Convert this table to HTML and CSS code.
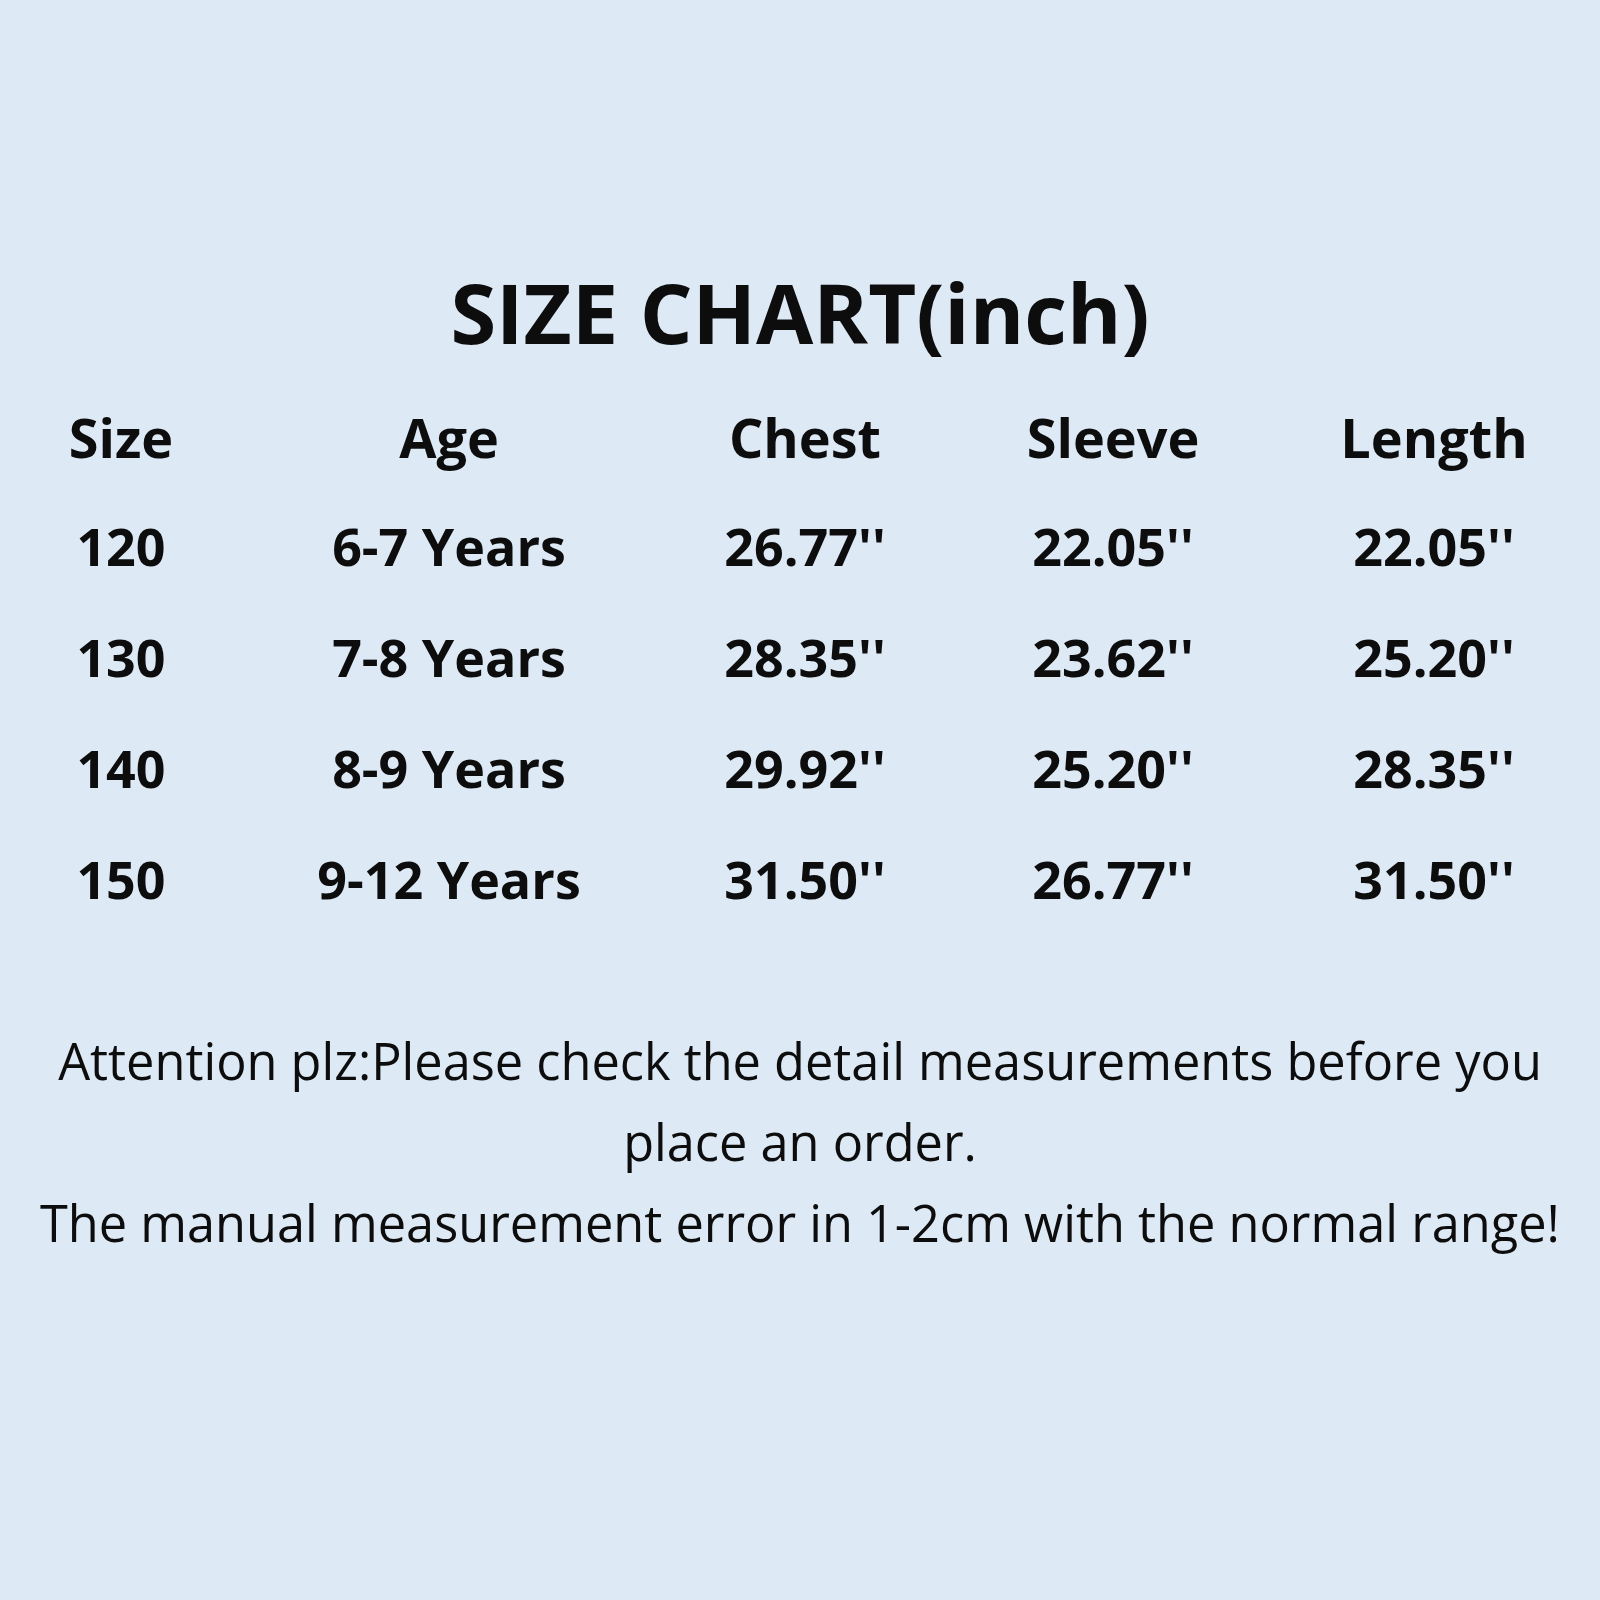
FILE: index.html
```html
<!DOCTYPE html>
<html lang="en">
<head>
<meta charset="utf-8">
<title>Size Chart</title>
<link rel="stylesheet" href="styles.css">
</head>
<body>
<main class="page">
  <h1 class="title">SIZE CHART(inch)</h1>
  <div class="chart">
    <div class="row head">
      <span>Size</span><span>Age</span><span>Chest</span><span>Sleeve</span><span>Length</span>
    </div>
    <div class="row">
      <span>120</span><span>6-7 Years</span><span>26.77''</span><span>22.05''</span><span>22.05''</span>
    </div>
    <div class="row">
      <span>130</span><span>7-8 Years</span><span>28.35''</span><span>23.62''</span><span>25.20''</span>
    </div>
    <div class="row">
      <span>140</span><span>8-9 Years</span><span>29.92''</span><span>25.20''</span><span>28.35''</span>
    </div>
    <div class="row">
      <span>150</span><span>9-12 Years</span><span>31.50''</span><span>26.77''</span><span>31.50''</span>
    </div>
  </div>
  <div class="notes">
    <p>Attention plz:Please check the detail measurements before you place an order.</p>
    <p>The manual measurement error in 1-2cm with the normal range!</p>
  </div>
</main>
</body>
</html>
```

FILE: styles.css
```css
html, body {
  margin: 0;
  padding: 0;
  background: #dde9f5;
}
.page {
  width: 1600px;
  height: 1600px;
  font-family: "Open Sans", "Noto Sans", sans-serif;
  color: #0d0d0d;
  padding-top: 262px;
  box-sizing: border-box;
}
.title {
  margin: 0;
  text-align: center;
  font-size: 83px;
  line-height: 100px;
  font-weight: 700;
  letter-spacing: 0;
}
.chart {
  margin-top: 22px;
}
.row {
  display: grid;
  grid-template-columns: 242px 414px 298px 318px 324px;
  height: 111px;
  align-items: center;
  font-weight: 700;
  font-size: 52px;
}
.row span {
  text-align: center;
  white-space: nowrap;
}
.row.head {
  font-size: 54px;
  height: 106px;
}
.notes {
  margin-top: 86px;
  text-align: center;
  font-size: 50.5px;
  line-height: 81px;
  padding: 0 30px;
}
.notes p {
  margin: 0;
}
```
